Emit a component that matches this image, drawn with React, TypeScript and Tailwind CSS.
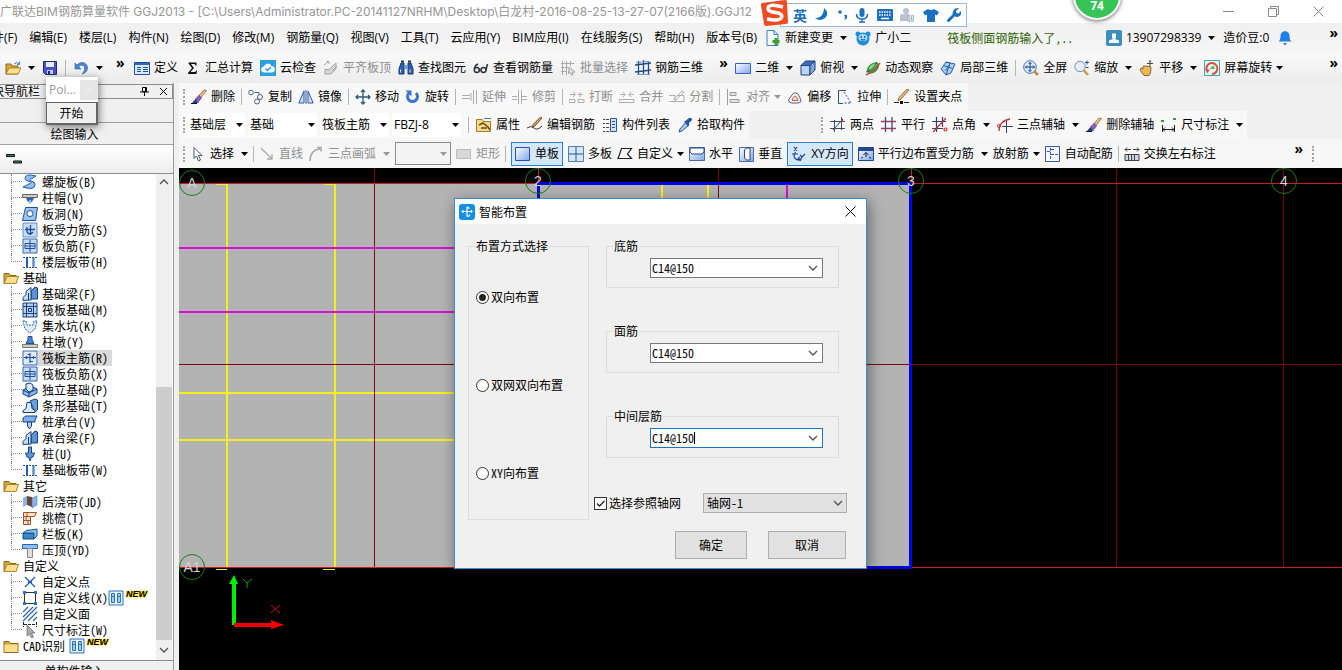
import React from 'react';

const ui = "font-['Open_Sans','Noto_Sans_CJK_SC',sans-serif]";
// half-width latin, the way the classic dialog font sets it
const song = "font-['Noto_Sans_CJK_SC',sans-serif] [font-feature-settings:'hwid']";

// 16x16 drawings, keyed by name
const icons: Record<string, React.ReactNode> = {
  folder: (
    <>
      <path d="M1 3.500h5l1.500 2H13v8H1z" fill="#d9a534" stroke="#8a6a1c" />
      <path d="M4 6.500H15.500L13 13.500H1z" fill="#ffe08a" stroke="#a8842c" />
    </>
  ),
  folderOpen: (
    <>
      <path d="M1 4h5l1 2h6v8H1z" fill="#d9a534" stroke="#8a6a1c" />
      <path d="M4 8h12l-3 6H1z" fill="#ffe28a" stroke="#a8842c" />
      <path d="M9 4q3-3 5 0M14.500 1.500V4.500H12" fill="none" stroke="#4a78b8" />
    </>
  ),
  folderShut: (
    <>
      <path d="M1 3.500h5l1.500 2H15v9H1z" fill="#d9a534" stroke="#8a6a1c" />
      <path d="M1.500 6.500h13v7.500h-13z" fill="#ffe08a" />
    </>
  ),
  save: (
    <>
      <path d="M1.500 1.500h13v13h-11l-2-2z" fill="#4a50c8" stroke="#23267a" />
      <path d="M4 2h8v5H4z" fill="#e6ecff" />
      <path d="M5 10h6v4H5z" fill="#c9cde8" />
      <path d="M6 11h2v3H6z" fill="#23267a" />
    </>
  ),
  undo: <path d="M2 3v6h6L5.800 6.800C8 4 12 5 11.500 9c-.2 2-1 3.500-2.500 5 4-1 6-4 5.500-7C13.500 2 7.500 1 4 5z" fill="#4b86d6" stroke="#2b5da8" strokeWidth=".6" />,
  define: (
    <>
      <path d="M.5 2.500h15v12H.5z" fill="#dcebff" stroke="#1d4f9c" />
      <path d="M1 3h14v2H1z" fill="#2f6ac0" />
      <path d="M3 7.500h4M3 9.500h4M3 11.500h4M9 7.500h5M9 9.500h5M9 11.500h5" stroke="#1d4f9c" />
    </>
  ),
  sigma: <path d="M3.500 2.500h8v3h-1Q10.300 4 9 4H6l3 4-3.500 4h4q1.500 0 1.500-1.500h1L11.500 14H3v-1l4-5-3.500-4.500z" fill="#111" />,
  cloud: (
    <>
      <path d="M0 0h16v16H0z" fill="#2ba0dc" />
      <path d="M4.500 12.500a3 3 0 0 1-.5-6 4 4 0 0 1 7.500-.5 3.200 3.200 0 0 1 0 6.500z" fill="#fff" />
      <path d="M5.500 8.500l2 2L11 7" fill="none" stroke="#2ba0dc" strokeWidth="1.500" />
    </>
  ),
  flush: (
    <>
      <path d="M2 9.500h4L13 3v6l-5 5H2z" fill="#d6d6d6" stroke="#a5a5a5" />
      <path d="M1 5l4-3M3.500 1.500H6V4M9 11l5-5" fill="none" stroke="#a5a5a5" />
    </>
  ),
  binoculars: (
    <>
      <path d="M1 9l2-6h3v11H1zM15 9l-2-6h-3v11h5z" fill="#2f62a8" stroke="#17386c" />
      <path d="M6 5h4v4H6z" fill="#6f9bd8" />
      <path d="M2.500 9.500v3M12 9.500v3" stroke="#d6e6fa" />
      <path d="M3 1.500h3M10 1.500h3" stroke="#17386c" strokeWidth="2" />
    </>
  ),
  glasses: (
    <g fill="none" stroke="#2b3640" strokeWidth="1.500">
      <circle cx="3.800" cy="10" r="2.500" />
      <circle cx="10.500" cy="10" r="2.500" />
      <path d="M1.300 9Q2 5 5 4M13 10l1.500-6M6.300 10h1.500" />
    </g>
  ),
  batch: (
    <g fill="none" stroke="#a8a8a8">
      <path d="M2.500 1v14M6.500 1v14M10.500 1v5M1 3.500h13M1 7.500h7M1 11.500h6" />
      <path d="M9 7l6 5-3 .5 1 2.500-2-.5-1-2-1.500 1z" fill="#ddd" />
    </g>
  ),
  rebar3d: (
    <g fill="none" stroke="#234a86">
      <path d="M3.500 1v14M8.500 0v15M13.500 1v14M0 5l16-2M0 12l16-2" strokeWidth="1.300" />
      <path d="M1 2.500l13-1M2 14.500h13" stroke="#7a98c4" />
    </g>
  ),
  rect2d: <path d="M.5 3.500h15v10H.5z" fill="url(#blueFill)" stroke="#3a62c4" />,
  cube: (
    <>
      <path d="M1 5.500h9v9.500H1z" fill="#b9d4f6" stroke="#1e3f78" />
      <path d="M1 5.500L5.500 1H15l-5 4.500z" fill="#3c6fb8" stroke="#1e3f78" />
      <path d="M10 5.500L15 1v9l-5 5z" fill="#7aa6e0" stroke="#1e3f78" />
    </>
  ),
  orbit: (
    <>
      <ellipse cx="8" cy="8" rx="7" ry="4.500" transform="rotate(-40 8 8)" fill="#2f9a34" />
      <path d="M4 8q3-5 8-4-2 4-7 7z" fill="#8be07e" />
      <path d="M1 15Q9 11 15 3" fill="none" stroke="#c8502c" strokeWidth="1.500" />
      <path d="M1 12q6-1 11-10" fill="none" stroke="#1f5f9c" />
    </>
  ),
  local3d: (
    <>
      <path d="M1 9L6 2l9 2-4 9-5 2z" fill="#a8cdf2" stroke="#2b62a0" />
      <path d="M3.500 5.500l9 3M6 2l4 1-4 12M10.500 3l-5 8" fill="none" stroke="#2b62a0" />
    </>
  ),
  full: (
    <>
      <path d="M11 11l4 4" stroke="#c98c2c" strokeWidth="2.500" />
      <circle cx="7" cy="7" r="6.300" fill="#dcecff" stroke="#4a6fa8" />
      <path d="M7 2.500v9M2.500 7h9M5.500 4L7 2.500 8.500 4M5.500 10L7 11.500 8.500 10M4 5.500L2.500 7 4 8.500M10 5.500L11.500 7 10 8.500" fill="none" stroke="#1c3d78" />
    </>
  ),
  zoom: (
    <>
      <path d="M9.500 10l4.500 5" stroke="#d09a3c" strokeWidth="2.500" />
      <circle cx="6" cy="6.500" r="5.200" fill="#e4eefb" stroke="#7c8ea8" />
      <path d="M11 2.500h4M13 .5v4M11.500 7.500h3" stroke="#2c4f88" />
    </>
  ),
  pan: (
    <>
      <path d="M2 8l2 1V6.500q1-1.500 2 0 1-1.500 2 0 1-1 2 .3 1.500-1 2 .7L11.500 13 10 15.500H5L1 10z" fill="#e8b85c" stroke="#8e6424" />
      <path d="M11 .5v6M8 3.500h6M10 1.500l1-1 1 1" fill="none" stroke="#444" />
    </>
  ),
  screen: (
    <>
      <path d="M.5.5h15v15H.5z" fill="#e0f6f4" stroke="#3da6b0" />
      <path d="M3 11a5.500 5.500 0 1 1 5 3" fill="none" stroke="#e04a3c" strokeWidth="2" />
      <path d="M1.500 9.500h4.500L3 13.500z" fill="#e04a3c" />
      <path d="M6 9l3-4 2 4z" fill="#58b848" />
    </>
  ),
  brush: (
    <>
      <path d="M15.500 1.500L9.500 9 7.500 7l5.500-6z" fill="#e8c088" stroke="#7c5420" strokeWidth=".7" />
      <path d="M8 6.500l2.500 2.500-3 3.500L4.500 10z" fill="#8c62c8" stroke="#3e2c78" strokeWidth=".7" />
      <path d="M1 14h7l-3.500-4z" fill="#1f3f86" />
      <path d="M0 14.500h6" stroke="#111" />
    </>
  ),
  copy: (
    <g fill="none" stroke="#4a5f7c">
      <circle cx="3" cy="3.500" r="2.300" />
      <circle cx="12" cy="8" r="2.500" />
      <circle cx="9" cy="12.500" r="2.500" />
      <path d="M6.500 3.500h4.500v2" />
    </g>
  ),
  mirror: <path d="M6 2v12H.8zM10 2v12h5.200zM8 1v14" fill="#cfe0f8" stroke="#2b55a0" />,
  move: <path d="M8 1v14M1 8h14M6 3l2-2 2 2M6 13l2 2 2-2M3 6L1 8l2 2M13 6l2 2-2 2" fill="none" stroke="#2e5878" strokeWidth="1.300" />,
  rotate: (
    <>
      <path d="M4 4A5 5 0 1 0 11 4" fill="none" stroke="#3b76cc" strokeWidth="3" />
      <path d="M.5 1.500h6v6z" fill="#3b76cc" />
    </>
  ),
  extend: <path d="M0 6.500h8M0 9.500h8M11.500 1v14M14.500 1v14M9 4v8" fill="none" stroke="#adadad" />,
  trim: <path d="M0 7.500h5M10 7.500h5M6.500 1v14M9.500 1v14M0 10.500h5M10 10.500h5" fill="none" stroke="#adadad" />,
  brk: <path d="M0 10.500h6v3H0zM9 10.500h6v3H9zM1 5.500h5M4 3l2.500 2.500L4 8M9 5.500h5M11 3v5" fill="none" stroke="#adadad" />,
  merge: <path d="M0 10.500h15v3H0zM1 5.500h5M4 3l2 2.500L4 8M15 5.500h-5M12 3l-2 2.500L12 8" fill="none" stroke="#adadad" />,
  split: <path d="M0 12.500h15M0 6.500h6v6M9 6.500h6v6M5 10L13 2l2 1-8 8z" fill="none" stroke="#adadad" />,
  align: <path d="M1.500 0v16M4 3.500h6v3H4zM4 10.500h9v3H4z" fill="#e4e4e4" stroke="#9c9c9c" />,
  offset: (
    <g fill="none">
      <path d="M5 6a3.500 3.500 0 0 1 6.500 0l2.500 5q0 3-3 3H5q-3.500 0-3.500-3z" stroke="#555f74" />
      <path d="M6.500 8q1.500-2 3 0l1.500 3.500H5z" fill="#fbe0e0" stroke="#d05858" />
    </g>
  ),
  stretch: (
    <g fill="none" stroke="#2b4f8c">
      <path d="M9 1.500H1.500v13H6" />
      <path d="M7 3l7 11H6" strokeDasharray="2 1.500" />
    </g>
  ),
  grip: (
    <>
      <path d="M15 1l-8 9-3 2 1-3.500L13 0z" fill="#e9bf7c" stroke="#775220" strokeWidth=".8" />
      <path d="M0 13.500h5M10 13.500h5" stroke="#222" />
      <path d="M6 12h3v3H6z" fill="#111" />
    </>
  ),
  props: (
    <>
      <path d="M.5 2.500h6l1 2h7v10H.5z" fill="#f7d98a" stroke="#a37a28" />
      <path d="M3 8l4-2 5 4 2 3M5 11h6" fill="none" stroke="#6f4a18" strokeWidth="1.500" />
      <path d="M8 1.500h7" stroke="#4a78b8" />
    </>
  ),
  editbar: (
    <>
      <path d="M0 11q4-3 7 0t8-2" fill="none" stroke="#333" />
      <path d="M15 1L8 9l-3 1 1.500-3L13.500 0z" fill="#d0a058" stroke="#5c3c14" strokeWidth=".8" />
    </>
  ),
  list: (
    <>
      <path d="M8.500 1.500h6v13h-6z" fill="#cfe0fa" stroke="#2b55a0" />
      <path d="M10 4.500h3M10 7.500h3M10 10.500h3" stroke="#2b55a0" />
      <path d="M1 2.500h2M1 6.500h2M1 10.500h2M1 14.500h2M4 2.500h3M4 6.500h3M4 10.500h3M4 14.500h3" stroke="#444" />
    </>
  ),
  picker: (
    <>
      <path d="M9 5l3 3-7 6-3 1 1-3z" fill="#a9ccf2" stroke="#2b568c" />
      <path d="M7 4.500l2-1L12 1q3-1 3 2l-3 3 0 2.500-1 1z" fill="#1c5aa8" />
    </>
  ),
  twopt: (
    <g fill="none" stroke="#34507a">
      <path d="M0 4.500h15M0 11.500h15M4.500 3v12M11.500 0v13" />
      <path d="M3 13L13 2" stroke="#333" />
      <path d="M4 12h1M11 4h2" stroke="#c03030" strokeWidth="2" />
    </g>
  ),
  parallel: (
    <g fill="none" stroke="#34507a" strokeWidth="1.300">
      <path d="M0 4.500h15M0 11.500h15" stroke="#b03a50" />
      <path d="M4.500 0v15M11 0v15" />
    </g>
  ),
  angle: (
    <g fill="none" stroke="#34406a" strokeWidth="1.200">
      <path d="M0 4.500h14M0 11.500h11M4.500 0v15M10.500 0v10" />
      <path d="M1 15L14 1" stroke="#c03030" />
      <circle cx="13.500" cy="12.500" r="1.500" stroke="#e02020" />
    </g>
  ),
  arc3: (
    <g fill="none">
      <path d="M9.500 4v12M5 9.500h11" stroke="#34406a" />
      <path d="M2 14Q2 4 13 2" stroke="#d03030" strokeWidth="1.300" />
      <circle cx="2" cy="9" r="1.500" stroke="#d03030" />
    </g>
  ),
  dim: (
    <g fill="none" stroke="#222">
      <path d="M1.500 8v7M13.500 8v7M2 12.500h11M4 10.500l-2 2 2 2M11 10.500l2 2-2 2" />
      <path d="M0 4h3M12 2h3" stroke="#3a9a3a" strokeWidth="2" />
    </g>
  ),
  cursor: <path d="M4 1.500v11l2.500-2.500 2 5 2-1-2-4.500H12z" fill="#fff" stroke="#4a5a78" />,
  line: <path d="M2 2l11 11M13 8v5H8" fill="none" stroke="#a8a8a8" strokeWidth="1.300" />,
  arc: <path d="M2 15Q2 4 12 3M9 1.500h4v4" fill="none" stroke="#a8a8a8" strokeWidth="1.500" />,
  rectGray: <path d="M.5 3.500h14v9H.5z" fill="#d8d8d8" stroke="#bbb" />,
  slab: <path d="M.5 1.500h14v13H.5z" fill="url(#blueFill)" stroke="#2b4fb0" />,
  slabs: (
    <>
      <path d="M.5.5h15v15H.5z" fill="#d4e6fa" stroke="#5c7ca8" />
      <path d="M8 1v14M1 8h14" stroke="#2b5690" />
    </>
  ),
  custom: <path d="M4.500 2.500h10l-4 5.500 4 4.500H1l1.500-4z" fill="none" stroke="#222" strokeWidth="1.200" />,
  horiz: (
    <>
      <path d="M.5 1.500h15v13H.5z" fill="url(#blueFill)" stroke="#4a6ca0" />
      <path d="M1 2h14v4l-2 2H3L1 6z" fill="#fff" stroke="#24488c" />
    </>
  ),
  vert: (
    <>
      <path d="M1.500 1.500h14v14h-14z" fill="url(#blueFill)" stroke="#4a6ca0" />
      <path d="M12 2H8.500L6.500 4v8l2 2H12z" fill="#fff" stroke="#24488c" />
    </>
  ),
  xy: (
    <g fill="none" stroke="#24408c" strokeWidth="1.200">
      <path d="M3 1l3 4M6 1L3 5M4.500 6q-4 5 2 8l4-1M9 9l2 2 3-3M11 11l-2 4M1 8h6M6 14l3-3" />
    </g>
  ),
  edge: (
    <>
      <path d="M.5 1.500h15v13H.5z" fill="url(#blueFill)" stroke="#24488c" />
      <path d="M1 3.500h14" stroke="#24488c" strokeWidth="3" />
      <path d="M8 6.500V11M5.500 9L8 6.500 10.500 9M3 12.500l2-1.500M13 12.500L11 11" fill="none" stroke="#222" />
    </>
  ),
  auto: (
    <>
      <path d="M.5.5h14v15H.5z" fill="#f4f8ff" stroke="#3b55b0" />
      <path d="M5.500 2v12M5 5.500H2M6 8.500h7M6 3.500h3" stroke="#3b55b0" strokeDasharray="3 1" />
    </>
  ),
  swap: (
    <g fill="none" stroke="#444">
      <path d="M1 8.500h14v6H1zM4.500 9v5M7.500 9v5M10.500 9v5" fill="#ccd4e0" />
      <path d="M1 3.500h6M9 3.500h6M3 1.500L1 3.500l2 2M13 1.500l2 2-2 2" />
    </g>
  ),
  newdoc: (
    <>
      <path d="M2 .5h7l4 4v11H2z" fill="#f2f9ff" stroke="#3b82b8" />
      <path d="M9 .5v4h4" fill="none" stroke="#3b82b8" />
      <path d="M11 8v7M7.500 11.500h7" stroke="#3aa020" strokeWidth="3" />
    </>
  ),
  mascot: (
    <>
      <circle cx="8" cy="9" r="6.500" fill="#1d8fdc" />
      <circle cx="3" cy="4" r="2.500" fill="#1d8fdc" />
      <circle cx="13" cy="4" r="2.500" fill="#1d8fdc" />
      <ellipse cx="8" cy="7.500" rx="4.500" ry="3.500" fill="#9fdcff" />
      <path d="M5.500 7h1.500M9 7h1.500" stroke="#134a80" strokeWidth="1.500" />
      <path d="M6 9.500q2 1 4 0" fill="none" stroke="#134a80" />
    </>
  ),
  user: (
    <>
      <rect width="16" height="16" rx="2" fill="#3d8ebc" />
      <path d="M6 3.500h4v4L9 9l4 1.500V13H3v-2.500L7 9 6 7.500z" fill="#fff" />
    </>
  ),
  bell: (
    <>
      <path d="M8 1q5 1 4.500 6 0 3 2 4.500h-13q2-1.500 2-4.500Q3 2 8 1z" fill="#1f7fe8" />
      <path d="M6 13h4l-2 2.500z" fill="#1f7fe8" />
    </>
  ),
  // component tree
  spiral: <path d="M14 2Q3-1 3 4.500q0 2.500 5 3 3 .5-1 2.500L1 13q12 4 12-2.500 0-3-4-3.500-3-1 1-2.500z" fill="#8fc0f4" stroke="#1f5fae" />,
  cap: (
    <>
      <path d="M.5 4.500h15v3H.5z" fill="#ccc" stroke="#666" />
      <path d="M4 8h8l-2 4H6z" fill="#2c62b0" />
      <path d="M7 10h2v4H7z" fill="#9cc2f0" />
    </>
  ),
  hole: (
    <>
      <path d="M3.500 1.500h12l-2 13H.5z" fill="#9cc2f0" stroke="#1f4f9c" />
      <circle cx="8" cy="7.500" r="3" fill="#fff" stroke="#1f4f9c" />
    </>
  ),
  force: (
    <>
      <path d="M1 1h14v14H1z" fill="#c4dcf8" stroke="#6d92c8" />
      <path d="M3 7.500h10M8.500 3v10M5 5v5q3 4 6 0" fill="none" stroke="#1f4f9c" strokeWidth="1.300" />
    </>
  ),
  neg: (
    <>
      <path d="M1 1h14v14H1z" fill="#c4dcf8" stroke="#3b66a8" />
      <path d="M3 5.500h10v5H3zM8 2v12M3 8h10" fill="none" stroke="#1f4f9c" />
    </>
  ),
  strip: (
    <>
      <path d="M1 3.500h14M1 13.500h14" stroke="#1f4f9c" strokeDasharray="2 1" />
      <path d="M4.500 4v9M11 4v9M5.500 4v9M12 4v9" stroke="#1f5fc0" />
    </>
  ),
  beam: (
    <>
      <path d="M9 5l4-4 2.500 1v11H9z" fill="#5c92d4" stroke="#15407c" />
      <path d="M1 14.500v-3l3-3v-3l5-4v12.500z" fill="#c4dcf8" stroke="#15407c" />
      <path d="M6.500 7v7" stroke="#15407c" />
    </>
  ),
  raft: (
    <>
      <path d="M1 1h14v14H1z" fill="#b4d0f4" stroke="#15407c" />
      <path d="M4.500 1v14M11.500 1v14M1 4.500h14M1 11.500h14M6.500 6.500h3v3h-3z" fill="none" stroke="#15407c" />
    </>
  ),
  pit: <path d="M1 3h3l1 4h6l1-4h3l-2 8-5 4-5-4z" fill="#dfeafb" stroke="#2c62b0" strokeDasharray="2 1" />,
  pier: (
    <>
      <path d="M6 2.500h4v3l2 4H4l2-4z" fill="#4a84cc" stroke="#1f4f9c" />
      <path d="M.5 10.500h15v3H.5z" fill="#d0d0c8" stroke="#777" />
    </>
  ),
  main: (
    <>
      <path d="M1 1h14v14H1z" fill="#dcebff" stroke="#3b66a8" />
      <path d="M2 7.500h12M8 3v10M5.500 4.500H8M8 11.500h3M4.500 6v3M11.500 6v3" fill="none" stroke="#1f4f9c" strokeWidth="1.200" />
    </>
  ),
  indep: (
    <>
      <path d="M1 8l8-4 6 3v4l-8 4-6-3z" fill="#8fb8ea" stroke="#15407c" />
      <path d="M4 2l4-1 3 2v5L7 10 4 7z" fill="#d8e8fb" stroke="#15407c" />
      <path d="M1 8l6 3 8-4M7 11v4" fill="none" stroke="#15407c" />
    </>
  ),
  stripf: (
    <>
      <path d="M8 3l5-2 2.500 1v10L13 14z" fill="#6c9edc" stroke="#15407c" />
      <path d="M1 14.500v-2l3-2 1-6h4l1 6 3 2v2z" fill="#d8e8fb" stroke="#15407c" />
    </>
  ),
  pilecap: (
    <>
      <path d="M1 4l3-2h11l-2 4v2H1z" fill="#7eb0ea" stroke="#15407c" />
      <path d="M5.500 8h4v4l-2 3-2-3z" fill="#b4d4f8" stroke="#15407c" />
    </>
  ),
  pile: <path d="M6.500 1h3v6h3L11 11H9.500L8 15l-1.500-4H5L3.500 7h3z" fill="#5e96d8" stroke="#1b4784" />,
  pour: (
    <>
      <path d="M1 4l4-2v9l-4 2z" fill="#8ab4e8" />
      <path d="M5 2l5 1v10l-5-2z" fill="#6a4a34" />
      <path d="M10 4l5-2v9l-5 3z" fill="#8ab4e8" stroke="#46699c" strokeWidth=".5" />
    </>
  ),
  eave: (
    <>
      <path d="M1.500 2.500h13l-2 4h-4v8h-7z" fill="#fbe4cc" stroke="#a0522d" />
      <path d="M1.500 6.500h7M1.500 10.500h7M5 2.500v4M4 6.500v4M6 10.500v4" stroke="#a0522d" />
    </>
  ),
  rail: (
    <>
      <path d="M1 7h11v6H1z" fill="#3a86c8" stroke="#174f88" />
      <path d="M1 7q4-4 8-3l6-1v7l-3 3V7z" fill="#8cc4f0" stroke="#174f88" />
    </>
  ),
  coping: (
    <>
      <path d="M.5 2.500h15v4H.5z" fill="#8cc0f4" stroke="#2c62b0" />
      <path d="M5.500 6.500h5v9h-5z" fill="#ddd" stroke="#888" />
    </>
  ),
  pt: <path d="M3 3l10 10M13 3L3 13M6 8h4" fill="none" stroke="#1f5fae" strokeWidth="1.300" />,
  poly: (
    <>
      <path d="M2.500 2.500h11v11h-11z" fill="none" stroke="#333" />
      <path d="M1 1h3v3H1zM12 1h3v3h-3zM1 12h3v3H1zM12 12h3v3h-3z" fill="#2c72d0" />
    </>
  ),
  hatch: <path d="M1 6l5-5M1 11L11 1M1 15L15 1M6 15l9-9M11 15l4-4" fill="none" stroke="#2c62b0" strokeWidth="1.200" />,
  dimcur: (
    <>
      <path d="M1.500 0v5M14.500 0v5M2 2.500h12" stroke="#222" strokeDasharray="3 1" />
      <path d="M5 3v11l2.500-2 2 4 2-1-2-4H13z" fill="#aaa" stroke="#666" strokeWidth=".7" />
    </>
  ),
  book: (
    <>
      <path d="M1 1h14v14H1z" fill="#e8f4ff" stroke="#2c72b8" />
      <path d="M3.500 3.500h3v9h-3zM9.500 3.500h3v9h-3zM3.500 6.500h3M9.500 6.500h3" fill="#9fd0f4" stroke="#2c72b8" />
    </>
  ),
};

const Icon = ({ name }: { name: string }) => (
  <svg viewBox="0 0 16 16" className="size-4 shrink-0" aria-hidden="true">
    {icons[name]}
  </svg>
);

const Arrow = ({ dim = false }: { dim?: boolean }) => (
  <svg viewBox="0 0 7 4" className={`h-1 w-[7px] shrink-0 ${dim ? 'fill-[#999]' : 'fill-black'}`} aria-hidden="true">
    <path d="M0 0h7L3.500 4z" />
  </svg>
);

const Sep = () => <span className="h-4 w-px shrink-0 bg-[#b5b5b5]" />;

const Grip = () => <span className="h-4 w-0 shrink-0 border-l-2 border-dotted border-[#a5a5a5]" />;

const More = () => <span className="block shrink-0 text-sm leading-5 font-bold">»</span>;

type Entry = { icon?: string; label: string; off?: boolean; on?: boolean; menu?: 'near' | 'far' } | '|';

const Tools = ({ items }: { items: Entry[] }) => (
  <>
    {items.map((item, i) =>
      item === '|' ? (
        <Sep key={i} />
      ) : (
        <button
          key={i}
          className={`flex shrink-0 items-center gap-1 whitespace-nowrap ${item.off ? 'text-[#8e8e8e]' : ''} ${
            item.on ? 'h-6 border border-[#2a7fd0] bg-[#d5e8fa] px-[3px]' : ''
          }`}
        >
          {item.icon && <Icon name={item.icon} />}
          {item.label}
          {item.menu && (
            <span className={item.menu === 'far' ? 'pl-[3px]' : ''}>
              <Arrow dim={item.off} />
            </span>
          )}
        </button>
      ),
    )}
  </>
);

const menus = ['文件(F)', '编辑(E)', '楼层(L)', '构件(N)', '绘图(D)', '修改(M)', '钢筋量(Q)', '视图(V)', '工具(T)', '云应用(Y)', 'BIM应用(I)', '在线服务(S)', '帮助(H)', '版本号(B)'];

const mainTools: Entry[] = [
  { icon: 'define', label: '定义' },
  { icon: 'sigma', label: '汇总计算' },
  { icon: 'cloud', label: '云检查' },
  { icon: 'flush', label: '平齐板顶', off: true },
  { icon: 'binoculars', label: '查找图元' },
  { icon: 'glasses', label: '查看钢筋量' },
  { icon: 'batch', label: '批量选择', off: true },
  { icon: 'rebar3d', label: '钢筋三维' },
];

const viewTools: Entry[] = [
  { icon: 'rect2d', label: '二维', menu: 'far' },
  { icon: 'cube', label: '俯视', menu: 'far' },
  { icon: 'orbit', label: '动态观察' },
  { icon: 'local3d', label: '局部三维' },
  '|',
  { icon: 'full', label: '全屏' },
  { icon: 'zoom', label: '缩放', menu: 'far' },
  { icon: 'pan', label: '平移', menu: 'far' },
  { icon: 'screen', label: '屏幕旋转', menu: 'near' },
];

const editTools: Entry[] = [
  { icon: 'brush', label: '删除' },
  '|',
  { icon: 'copy', label: '复制' },
  { icon: 'mirror', label: '镜像' },
  '|',
  { icon: 'move', label: '移动' },
  { icon: 'rotate', label: '旋转' },
  '|',
  { icon: 'extend', label: '延伸', off: true },
  { icon: 'trim', label: '修剪', off: true },
  '|',
  { icon: 'brk', label: '打断', off: true },
  { icon: 'merge', label: '合并', off: true },
  { icon: 'split', label: '分割', off: true },
  '|',
  { icon: 'align', label: '对齐', off: true, menu: 'near' },
  { icon: 'offset', label: '偏移' },
  { icon: 'stretch', label: '拉伸' },
  '|',
  { icon: 'grip', label: '设置夹点' },
];

const memberTools: Entry[] = [
  '|',
  { icon: 'props', label: '属性' },
  { icon: 'editbar', label: '编辑钢筋' },
  { icon: 'list', label: '构件列表' },
  { icon: 'picker', label: '拾取构件' },
];

const axisTools: Entry[] = [
  { icon: 'twopt', label: '两点' },
  { icon: 'parallel', label: '平行' },
  { icon: 'angle', label: '点角', menu: 'far' },
  { icon: 'arc3', label: '三点辅轴', menu: 'far' },
  { icon: 'brush', label: '删除辅轴' },
  { icon: 'dim', label: '尺寸标注', menu: 'far' },
];

const drawTools: Entry[] = [
  { icon: 'cursor', label: '选择', menu: 'far' },
  '|',
  { icon: 'line', label: '直线', off: true },
  { icon: 'arc', label: '三点画弧', off: true, menu: 'far' },
];

const layoutTools: Entry[] = [
  { icon: 'rectGray', label: '矩形', off: true },
  '|',
  { icon: 'slab', label: '单板', on: true },
  { icon: 'slabs', label: '多板' },
  { icon: 'custom', label: '自定义', menu: 'near' },
  { icon: 'horiz', label: '水平' },
  { icon: 'vert', label: '垂直' },
  { icon: 'xy', label: 'XY方向', on: true },
  { icon: 'edge', label: '平行边布置受力筋', menu: 'far' },
  { label: '放射筋', menu: 'near' },
  { icon: 'auto', label: '自动配筋' },
  '|',
  { icon: 'swap', label: '交换左右标注' },
];

const pickers = [
  { value: '基础层', width: 'w-[57px]' },
  { value: '基础', width: 'w-[69px]' },
  { value: '筏板主筋', width: 'w-[69px]' },
  { value: 'FBZJ-8', width: 'w-[69px]' },
];

type Leaf = { icon: string; label: string; fresh?: boolean; selected?: boolean };

const tree: { title?: string; items: Leaf[] }[] = [
  {
    items: [
      { icon: 'spiral', label: '螺旋板(B)' },
      { icon: 'cap', label: '柱帽(V)' },
      { icon: 'hole', label: '板洞(N)' },
      { icon: 'force', label: '板受力筋(S)' },
      { icon: 'neg', label: '板负筋(F)' },
      { icon: 'strip', label: '楼层板带(H)' },
    ],
  },
  {
    title: '基础',
    items: [
      { icon: 'beam', label: '基础梁(F)' },
      { icon: 'raft', label: '筏板基础(M)' },
      { icon: 'pit', label: '集水坑(K)' },
      { icon: 'pier', label: '柱墩(Y)' },
      { icon: 'main', label: '筏板主筋(R)', selected: true },
      { icon: 'neg', label: '筏板负筋(X)' },
      { icon: 'indep', label: '独立基础(P)' },
      { icon: 'stripf', label: '条形基础(T)' },
      { icon: 'pilecap', label: '桩承台(V)' },
      { icon: 'beam', label: '承台梁(F)' },
      { icon: 'pile', label: '桩(U)' },
      { icon: 'strip', label: '基础板带(W)' },
    ],
  },
  {
    title: '其它',
    items: [
      { icon: 'pour', label: '后浇带(JD)' },
      { icon: 'eave', label: '挑檐(T)' },
      { icon: 'rail', label: '栏板(K)' },
      { icon: 'coping', label: '压顶(YD)' },
    ],
  },
  {
    title: '自定义',
    items: [
      { icon: 'pt', label: '自定义点' },
      { icon: 'poly', label: '自定义线(X)', fresh: true },
      { icon: 'hatch', label: '自定义面' },
      { icon: 'dimcur', label: '尺寸标注(W)' },
    ],
  },
];

const NewBadge = () => (
  <>
    <Icon name="book" />
    <span className="self-start pl-0.5 font-['Liberation_Sans',sans-serif] text-[9px] leading-[9px] font-bold italic [font-feature-settings:normal] [text-shadow:0_0_2px_#ffd900,0_0_2px_#ffd900,0_0_1px_#ffd900]">
      NEW
    </span>
  </>
);

const Tree = () => (
  <ul className={`flex-1 ${song}`}>
    {tree.map((group, g) => (
      <li key={g}>
        {group.title && (
          <div className="flex h-4 items-center gap-1 pl-[3px]">
            <Icon name="folder" />
            {group.title}
          </div>
        )}
        <ul>
          {group.items.map((leaf, i) => (
            <li key={i} className="flex h-4 items-center pl-[11px] whitespace-nowrap">
              <span className="w-[11px]">
                <span className="block h-2 border-b border-l border-dotted border-[#888]" />
                <span className={`block h-2 border-dotted border-[#888] ${i < group.items.length - 1 ? 'border-l' : ''}`} />
              </span>
              <Icon name={leaf.icon} />
              <span className={`flex h-4 items-center pl-1 ${leaf.selected ? 'bg-[#d9d9d9] pr-1' : ''}`}>
                {leaf.label}
                {leaf.fresh && <NewBadge />}
              </span>
            </li>
          ))}
        </ul>
      </li>
    ))}
    <li className="flex h-4 items-center gap-1 pl-[3px]">
      <Icon name="folderShut" />
      CAD识别
      <span className="flex h-4 items-center">
        <NewBadge />
      </span>
    </li>
  </ul>
);

const Chevron = ({ up = false }: { up?: boolean }) => (
  <svg viewBox="0 0 10 6" className="h-1.5 w-2.5 shrink-0" aria-hidden="true">
    <path d={up ? 'M1 5l4-4 4 4' : 'M1 1l4 4 4-4'} fill="none" stroke="#505050" strokeWidth="1.300" />
  </svg>
);

const Dock = () => (
  <aside className="mr-[5px] flex w-[174px] shrink-0 flex-col border-r border-[#9a9a9a] bg-[#f0f0f0] pt-px">
    <div className="flex h-[15px] items-center justify-between overflow-hidden border border-l-0 border-[#8c8c8c] pr-1">
      <span className="-ml-5 whitespace-nowrap">模块导航栏</span>
      <span className="flex gap-2.5">
        <svg viewBox="0 0 9 9" className="size-[9px] fill-none stroke-black">
          <path d="M2.500.5h4v4h-4zM5.500 0v5M0 5h9M4.500 5v4" />
        </svg>
        <svg viewBox="0 0 9 9" className="size-[9px] fill-none stroke-black">
          <path d="M1 1l7 7M8 1L1 8" />
        </svg>
      </span>
    </div>
    <button className={`h-6 border-b border-[#a0a0a0] pr-6 ${song}`}>工程设置</button>
    <button className={`h-[22px] border-b border-[#a0a0a0] pr-6 ${song}`}>绘图输入</button>
    <div className="flex h-7 items-center bg-linear-to-b from-white to-[#ededed] pl-1.5">
      <svg viewBox="0 0 18 10" className="h-2.5 w-[18px]" aria-hidden="true">
        <path d="M.5.5h8v2h-8zM7.500 7h8v2h-8z" fill="#2a8a8a" stroke="#111" />
      </svg>
    </div>
    <div className="flex min-h-0 flex-1 overflow-hidden border-t border-b border-[#8c8c8c] bg-white">
      <Tree />
      <div className="mr-px flex w-4 flex-col items-center bg-[#f0f0f0]">
        <span className="flex h-4 items-center">
          <Chevron up />
        </span>
        <span className="flex-[7]" />
        <span className="w-full flex-[9] bg-[#cdcdcd]" />
        <span className="flex h-5 items-center">
          <Chevron />
        </span>
      </div>
    </div>
    <button className={`flex h-[9px] shrink-0 justify-center overflow-hidden pt-0.5 pr-6 ${song}`}>单构件输入</button>
  </aside>
);

const AxisMark = ({ x, y, label }: { x: number; y: number; label: string }) => (
  <g>
    <circle cx={x} cy={y} r="12.500" fill="none" stroke="#128012" />
    <text x={x} y={y + 5} textAnchor="middle" fontSize="14" fontFamily="Liberation Sans" fill="#d4d4d4">
      {label}
    </text>
  </g>
);

const Canvas = () => (
  <svg className="absolute inset-0 h-full w-full bg-black">
    <g fill="none">
      <path d="M0 16h732v384H0z" fill="#b3b3b3" />
      <path d="M48 16v384M156 16v384M0 225h276M0 272h276M483 16v14M529 16v14" stroke="#f5f01c" strokeWidth="2" />
      <path d="M37 16.500h11M145 16.500h11M37 401.500h11M144 401.500h12" stroke="#f5f01c" />
      <path d="M0 80h276M0 144h276M608 16v14" stroke="#d414d4" strokeWidth="2" />
      <path d="M0 196.500h1163M195.500 0v399M539.500 0v399M937.500 0v399M1104.500 0v399" stroke="#7c0410" />
      <path d="M0 15.500H1163" stroke="#d01c20" />
      <path d="M0 399.500H1163" stroke="#d01c20" />
      <path d="M359.500 0v16M732.500 0v16" stroke="#d01c20" />
      <path d="M359.500 15.500h372v384h-372z" stroke="#0404e0" strokeWidth="3" />
    </g>
    <AxisMark x={13} y={15} label="A" />
    <AxisMark x={359} y={13} label="2" />
    <AxisMark x={732} y={13} label="3" />
    <AxisMark x={1105} y={13} label="4" />
    <AxisMark x={13} y={399} label="A1" />
    <path d="M53 457v-41h-3l5-9 4 9h-2v41z" fill="#00f000" />
    <path d="M55 455h37v-3l13 5-13 4v-2H55z" fill="#f00000" />
    <path d="M64 411l4 4 5-4M68 415v5" fill="none" stroke="#10a010" />
    <path d="M92 437l9 8M101 437l-9 8" fill="none" stroke="#c01010" />
  </svg>
);

const ComboField = ({ title, focused = false }: { title: string; focused?: boolean }) => (
  <fieldset className="mr-2 ml-3 h-[50px] border border-[#dcdcdc] pt-1 pl-[43px]">
    <legend className="-ml-[37px] px-px leading-4">{title}</legend>
    <div className={`flex h-5 w-[173px] items-center border bg-white pr-1 pl-px ${focused ? 'border-[#1f73bd]' : 'border-[#7a7a7a]'}`}>
      <input aria-label={title} defaultValue="C14@150" className="h-4 field-sizing-content outline-none" />
      {focused && <span className="h-3 w-px bg-black" />}
      <button aria-label={`${title}列表`} className="ml-auto">
        <Chevron />
      </button>
    </div>
  </fieldset>
);

const LayoutDialog = () => (
  <div role="dialog" aria-label="智能布置" className={`absolute top-[30px] left-[275px] w-[413px] border border-[#3c8ad0] bg-[#f0f0f0] shadow-[2px_4px_14px_rgba(0,0,0,0.45)] ${song}`}>
    <div className="flex h-[25px] items-center gap-1 bg-white pr-2.5 pl-1">
      <svg viewBox="0 0 16 16" className="size-4" aria-hidden="true">
        <rect width="16" height="16" rx="3" fill="#1590e8" />
        <path d="M8 3v9.500M2.500 7.500h11M8 3q2 0 2 2M4 6v3M12.500 6v3M8 12.500q2.500 0 3-2" fill="none" stroke="#fff" strokeWidth="1.200" />
      </svg>
      <span>智能布置</span>
      <button aria-label="关闭" className="ml-auto">
        <svg viewBox="0 0 11 11" className="size-[11px] fill-none stroke-black">
          <path d="M.5.5l10 10M10.500.5l-10 10" />
        </svg>
      </button>
    </div>
    <div className="flex gap-[5px] pt-3.5 pr-[19px] pl-[13px]">
      <fieldset className="flex h-[282px] w-[121px] shrink-0 flex-col gap-[72px] border border-[#dcdcdc] pt-[35px] pl-[7px]">
        <legend className="-ml-px px-px leading-4">布置方式选择</legend>
        {['双向布置', '双网双向布置', 'XY向布置'].map((text, i) => (
          <label key={text} className="flex h-4 items-center gap-0.5">
            <input
              type="radio"
              name="layout"
              defaultChecked={i === 0}
              className="size-[13px] appearance-none rounded-full border border-[#333] bg-white checked:bg-[radial-gradient(circle,#222_0_3px,#fff_4px)]"
            />
            {text}
          </label>
        ))}
      </fieldset>
      <div className="flex flex-1 flex-col gap-[35px]">
        <ComboField title="底筋" />
        <ComboField title="面筋" />
        <ComboField title="中间层筋" focused />
        <div className="flex h-5 items-center justify-between">
          <label className="flex items-center gap-0.5">
            <span className="grid">
              <input type="checkbox" defaultChecked className="col-start-1 row-start-1 size-[13px] appearance-none border border-[#333] bg-white" />
              <svg viewBox="0 0 13 13" className="pointer-events-none col-start-1 row-start-1 size-[13px]" aria-hidden="true">
                <path d="M3 6.500l2.500 2.500L10.500 4" fill="none" stroke="#222" strokeWidth="1.300" />
              </svg>
            </span>
            选择参照轴网
          </label>
          <div className="grid w-36 items-center">
            <select aria-label="参照轴网" className="col-start-1 row-start-1 h-5 w-full appearance-none border border-[#adadad] bg-[#e1e1e1] pl-[3px] leading-4">
              <option>轴网-1</option>
            </select>
            <span className="pointer-events-none col-start-1 row-start-1 mr-1 justify-self-end">
              <Chevron />
            </span>
          </div>
        </div>
      </div>
    </div>
    <div className="flex justify-end gap-[21px] pt-[11px] pr-5 pb-[9px]">
      <button className="h-7 w-[72px] border border-[#adadad] bg-[#e1e1e1]">确定</button>
      <button className="h-7 w-[78px] border border-[#adadad] bg-[#e1e1e1]">取消</button>
    </div>
  </div>
);

const ImeBar = () => (
  <div className="absolute top-[3px] left-[780px] flex h-6 w-[187px] items-center justify-between border border-[#9fb6d2] bg-white pr-1 pl-3">
    <svg viewBox="0 0 28 28" className="absolute -top-[5px] -left-5 size-7" aria-hidden="true">
      <path d="M1 4L24 1q2 0 2 2l1 20q0 2-2 2L5 27q-2 0-2-2L0 6q0-2 1-2z" fill="#ee4b22" />
      <path d="M22 8Q7 4 7 9.500q0 3 7.500 4t6 5q-2 4-14.500 1.500" fill="none" stroke="#fff" strokeWidth="3.500" />
    </svg>
    <span className={`text-sm leading-4 font-bold text-[#1d6fc0] ${song}`}>英</span>
    <svg viewBox="0 0 16 16" className="size-4 fill-[#1d6fc0]">
      <path d="M10 1q6 5 1 10-5 4-10 0 5 0 7-3 2-3 2-7z" />
    </svg>
    <svg viewBox="0 0 10 16" className="h-4 w-2.5 fill-[#1d6fc0]">
      <circle cx="2" cy="5" r="1.800" />
      <path d="M6 8h3q1 4-3 5 2-2 0-5z" />
    </svg>
    <svg viewBox="0 0 14 16" className="h-4 w-3.5">
      <rect x="4.500" y="1" width="5" height="9" rx="2.500" fill="#1d6fc0" />
      <path d="M1.500 7q0 5 5.500 5t5.500-5M7 12v3M4 15h6" fill="none" stroke="#1d6fc0" strokeWidth="1.500" />
    </svg>
    <svg viewBox="0 0 16 12" className="h-3 w-4">
      <rect width="16" height="12" rx="1" fill="#1d6fc0" />
      <path d="M2 3h12M2 6h12" stroke="#fff" strokeWidth="1.500" strokeDasharray="1.500 1" />
      <path d="M4 9.500h8" stroke="#fff" strokeWidth="1.500" />
    </svg>
    <svg viewBox="0 0 15 16" className="h-4 w-[15px] fill-[#b8c2d0]">
      <circle cx="6" cy="4" r="3" />
      <path d="M0 14V9q0-2 2-2h7v7z" />
      <path d="M8 8.500h2v6H8zM11.500 8.500h2v6h-2z" fill="#dfe5ec" stroke="#98a4b4" strokeWidth=".7" />
    </svg>
    <svg viewBox="0 0 16 14" className="h-3.5 w-4 fill-[#1d6fc0]">
      <path d="M5 1q3 2 6 0l5 3-2 3.500-2-1V14H4V6.500l-2 1L0 4z" />
    </svg>
    <svg viewBox="0 0 16 16" className="size-4">
      <path d="M2.500 13.500L9 7" stroke="#1d6fc0" strokeWidth="3" strokeLinecap="round" />
      <path d="M13 1L10 4l.5 2 2 .5L15 4q1 6-5 6L6.500 7Q7 0 13 1z" fill="#1d6fc0" />
    </svg>
  </div>
);

const App = () => (
  <div className={`relative flex h-screen flex-col overflow-hidden bg-[#f0f0f0] text-xs leading-4 text-black ${ui}`}>
    <svg className="absolute size-0" aria-hidden="true">
      <linearGradient id="blueFill" x1="0" y1="0" x2="1" y2="1">
        <stop offset="0" stopColor="#fff" />
        <stop offset="1" stopColor="#7da7ea" />
      </linearGradient>
    </svg>

    <header className="flex h-[23px] shrink-0 items-center justify-between bg-white pr-[18px] font-['Inter','Noto_Sans_CJK_SC',sans-serif] whitespace-nowrap text-[#969696]">
      <span>广联达BIM钢筋算量软件 GGJ2013 - [C:\Users\Administrator.PC-20141127NRHM\Desktop\白龙村-2016-08-25-13-27-07(2166版).GGJ12</span>
      <span className="flex gap-[34px]">
        <svg viewBox="0 0 11 11" className="size-[11px] fill-none stroke-[#888]">
          <path d="M0 5.500h11" />
        </svg>
        <svg viewBox="0 0 11 11" className="size-[11px] fill-none stroke-[#888]">
          <path d="M.5 2.500h8v8h-8zM2.500 2.500v-2h8v8h-2" />
        </svg>
        <svg viewBox="0 0 11 11" className="size-[11px] fill-none stroke-[#888]">
          <path d="M.5.5l10 10M10.500.5l-10 10" />
        </svg>
      </span>
    </header>

    <nav className="flex h-[30px] shrink-0 items-center overflow-hidden bg-linear-to-b from-[#f0f0f0] to-[#f6f6f6] pr-1 whitespace-nowrap">
      <div className="-ml-5 flex gap-3">
        {menus.map((m) => (
          <button key={m}>{m}</button>
        ))}
      </div>
      <div className="ml-2 flex items-center gap-2">
        <Tools items={[{ icon: 'newdoc', label: '新建变更', menu: 'far' }, { icon: 'mascot', label: '广小二' }]} />
      </div>
      <a href="#news" className={`ml-9 text-[#2c6200] ${song}`}>
        筏板侧面钢筋输入了，..
      </a>
      <div className="ml-auto flex items-center gap-2">
        <Tools items={[{ icon: 'user', label: '13907298339', menu: 'far' }, { label: '造价豆:0' }]} />
        <Icon name="bell" />
      </div>
      <span className="self-start pl-9">
        <More />
      </span>
    </nav>

    <div className="flex h-[30px] shrink-0 items-center overflow-hidden bg-linear-to-b from-[#fafafa] to-[#ececec] pr-1">
      <div className="flex w-[134px] shrink-0 items-center gap-[7px] self-stretch pl-[5px]">
        <Icon name="folderOpen" />
        <Arrow />
        <Icon name="save" />
        <Sep />
        <Icon name="undo" />
        <Arrow />
        <span className="ml-1.5 self-start">
          <More />
        </span>
      </div>
      <div className="flex items-center gap-[7px]">
        <Tools items={mainTools} />
      </div>
      <span className="w-8 shrink-0 self-start pl-4">
        <More />
      </span>
      <div className="flex items-center gap-[7px]">
        <Tools items={viewTools} />
      </div>
      <span className="ml-auto self-start">
        <More />
      </span>
    </div>

    <div className="flex min-h-0 flex-1">
      <Dock />
      <main className="flex min-w-0 flex-1 flex-col">
        <div className="flex h-7 shrink-0 items-center">
          <div className="flex h-7 items-center gap-1.5 bg-[#f8f8f8] pr-1.5 pl-1">
            <Grip />
            <Tools items={editTools} />
          </div>
        </div>
        <div className="flex h-7 shrink-0 items-center">
          <div className="flex h-7 items-center gap-[7px] bg-[#f8f8f8] pr-1 pl-1">
            <Grip />
            <div className="-ml-1 flex gap-[3px]">
              {pickers.map(({ value, width }) => (
                <div key={value} className={`grid items-center bg-white ${width}`}>
                  <select aria-label={value} className="col-start-1 row-start-1 h-6 w-full appearance-none pl-0.5">
                    <option>{value}</option>
                  </select>
                  <span className="pointer-events-none col-start-1 row-start-1 mr-0.5 justify-self-end">
                    <Arrow />
                  </span>
                </div>
              ))}
            </div>
            <Tools items={memberTools} />
          </div>
          <div className="ml-[72px] flex h-7 items-center gap-[7px] bg-[#f8f8f8] pr-1">
            <Grip />
            <Tools items={axisTools} />
          </div>
        </div>
        <div className="flex h-[29px] shrink-0 items-center gap-[5px] bg-[#f6f6f6] pr-7 pl-1">
          <Grip />
          <Tools items={drawTools} />
          <div className="grid w-14 shrink-0 items-center">
            <select aria-label="线型" className="col-start-1 row-start-1 h-[23px] w-full appearance-none border border-[#8c8c8c] bg-[#f4f4f4]">
              <option></option>
            </select>
            <span className="pointer-events-none col-start-1 row-start-1 mr-1 justify-self-end">
              <Arrow dim />
            </span>
          </div>
          <Tools items={layoutTools} />
          <span className="mr-1 ml-auto self-start">
            <More />
          </span>
          <Grip />
        </div>
        <div className="relative min-h-0 flex-1 overflow-hidden">
          <Canvas />
          <LayoutDialog />
        </div>
      </main>
    </div>

    <div className="absolute top-[77px] left-[46px] w-[52px] bg-white shadow-[1px_2px_8px_rgba(0,0,0,0.5)]">
      <div className="flex h-[25px] items-center justify-between pl-[3px] text-[#999]">
        Poi...
        <span className="flex h-5 w-[18px] items-center justify-center bg-[#e6e6e6] text-[#f4f4f4]">×</span>
      </div>
      <button className={`block h-[23px] w-full border border-r-2 border-b-2 border-[#666] bg-[#f0f0f0] ${song}`}>开始</button>
    </div>

    <ImeBar />
    <div className="absolute -top-7 left-[1073px] flex size-12 items-end justify-center rounded-full border-2 border-white bg-[#35c455] pb-1 font-bold text-white shadow-[0_1px_4px_rgba(0,0,0,0.6)]">74</div>
  </div>
);

export default App;
